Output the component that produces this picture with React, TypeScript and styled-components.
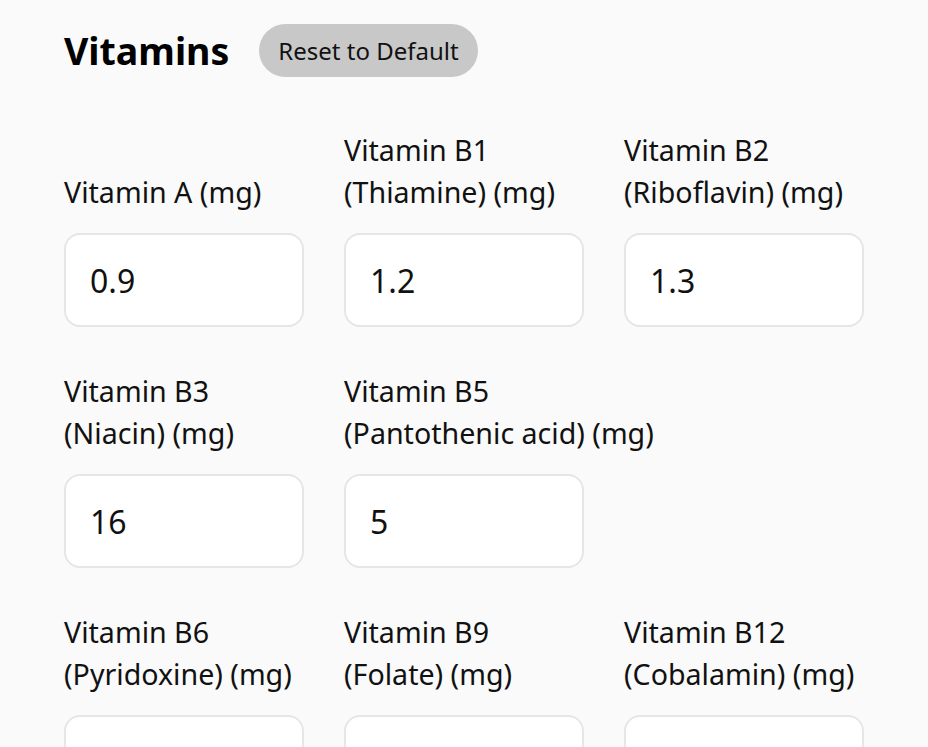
import React, { useState } from "react";
import styled, { createGlobalStyle } from "styled-components";

type Field = {
  key: string;
  name: string;
  alias?: string;
  unit: string;
  defaultValue: string;
};

const FIELDS: Field[] = [
  { key: "a", name: "Vitamin A", unit: "mg", defaultValue: "0.9" },
  { key: "b1", name: "Vitamin B1", alias: "Thiamine", unit: "mg", defaultValue: "1.2" },
  { key: "b2", name: "Vitamin B2", alias: "Riboflavin", unit: "mg", defaultValue: "1.3" },
  { key: "b3", name: "Vitamin B3", alias: "Niacin", unit: "mg", defaultValue: "16" },
  { key: "b5", name: "Vitamin B5", alias: "Pantothenic acid", unit: "mg", defaultValue: "5" },
  { key: "b6", name: "Vitamin B6", alias: "Pyridoxine", unit: "mg", defaultValue: "1.3" },
  { key: "b9", name: "Vitamin B9", alias: "Folate", unit: "mg", defaultValue: "0.4" },
  { key: "b12", name: "Vitamin B12", alias: "Cobalamin", unit: "mg", defaultValue: "0.0024" },
  { key: "c", name: "Vitamin C", unit: "mg", defaultValue: "90" },
  { key: "d", name: "Vitamin D", unit: "mg", defaultValue: "0.015" },
  { key: "e", name: "Vitamin E", unit: "mg", defaultValue: "15" },
];

// B5 starts a new row in the reference, leaving the third column empty
const ROW_BREAK_AFTER = new Set(["b5"]);

const defaults = () =>
  FIELDS.reduce<Record<string, string>>((acc, f) => {
    acc[f.key] = f.defaultValue;
    return acc;
  }, {});

const App: React.FC = () => {
  const [values, setValues] = useState<Record<string, string>>(defaults);

  return (
    <>
      <GlobalStyle />
      <Page>
        <Header>
          <Title>Vitamins</Title>
          <ResetButton onClick={() => setValues(defaults())}>Reset to Default</ResetButton>
        </Header>
        <Grid>
          {FIELDS.map((f) => (
            <React.Fragment key={f.key}>
              <FieldBox>
                <Label htmlFor={`vit-${f.key}`}>
                  {f.name}{" "}
                  <NoWrap>
                    {f.alias ? `(${f.alias}) ` : ""}({f.unit})
                  </NoWrap>
                </Label>
                <Input
                  id={`vit-${f.key}`}
                  value={values[f.key]}
                  onChange={(e) => setValues({ ...values, [f.key]: e.target.value })}
                />
              </FieldBox>
              {ROW_BREAK_AFTER.has(f.key) && <Spacer />}
            </React.Fragment>
          ))}
        </Grid>
      </Page>
    </>
  );
};

export default App;

const GlobalStyle = createGlobalStyle`
  body {
    margin: 0;
    background: #fafafa;
    font-family: "Noto Sans", "Open Sans", sans-serif;
    color: #111;
  }
`;

const Page = styled.div`
  padding: 24px 64px 40px;
`;

const Header = styled.div`
  display: flex;
  align-items: center;
  gap: 30px;
  height: 53px;
`;

const Title = styled.h1`
  margin: 0;
  font-size: 37.5px;
  font-weight: 700;
  color: #000;
`;

const ResetButton = styled.button`
  height: 53px;
  padding: 0 19px;
  border: none;
  border-radius: 27px;
  background: #c8c8c8;
  font-family: inherit;
  font-size: 24px;
  color: #111;
  cursor: pointer;
`;

const Grid = styled.div`
  display: grid;
  grid-template-columns: repeat(3, 240px);
  column-gap: 40px;
  row-gap: 43px;
  margin-top: 52px;
`;

const FieldBox = styled.div`
  display: flex;
  flex-direction: column;
  justify-content: flex-end;
  gap: 20px;
`;

const Spacer = styled.div``;

const Label = styled.label`
  font-size: 28.6px;
  line-height: 42px;
`;

const NoWrap = styled.span`
  white-space: nowrap;
`;

const Input = styled.input`
  box-sizing: border-box;
  width: 240px;
  height: 94px;
  padding: 0 24px;
  border: 2px solid #e6e6e2;
  border-radius: 16px;
  background: #fff;
  font-family: inherit;
  font-size: 32px;
  color: #111;
  outline: none;
`;
